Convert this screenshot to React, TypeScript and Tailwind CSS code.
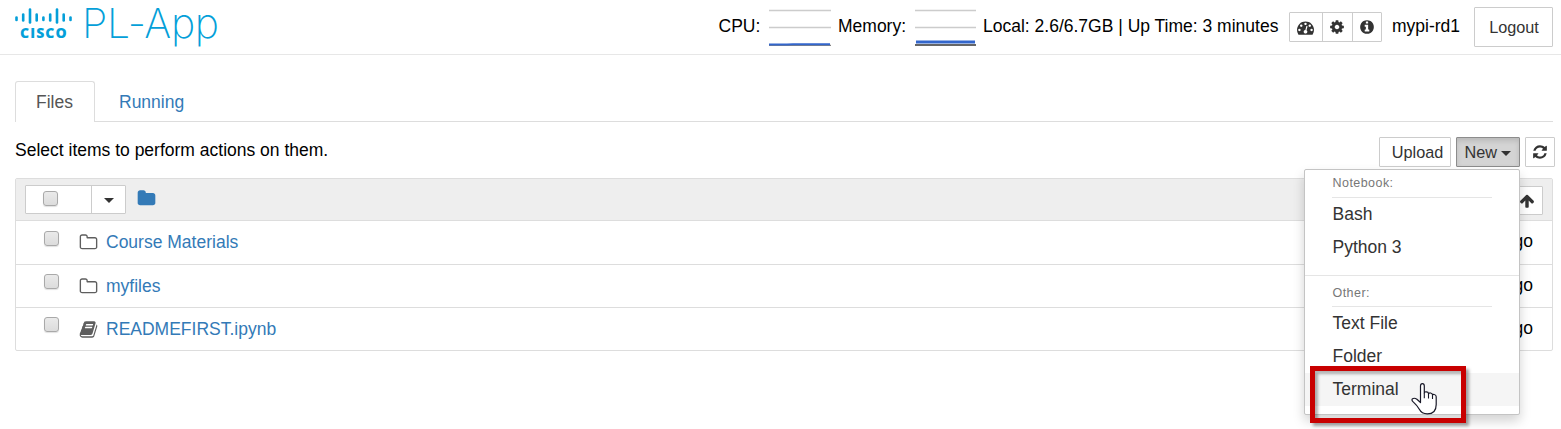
import type { ReactNode } from "react";

const ICONS = {
  dashboard:
    "M384 1152q0-53-37.5-90.5t-90.5-37.5-90.5 37.5-37.5 90.5 37.5 90.5 90.5 37.5 90.5-37.5 37.5-90.5zm192-448q0-53-37.5-90.5t-90.5-37.5-90.5 37.5-37.5 90.5 37.5 90.5 90.5 37.5 90.5-37.5 37.5-90.5zm428 481l101-382q6-26-7.5-48.5t-38.5-29.5-48 6.5-30 39.5l-101 382q-60 5-107 43.5t-63 98.5q-20 77 20 146t117 89 146-20 89-117q16-60-6-117t-72-91zm660-33q0-53-37.5-90.5t-90.5-37.5-90.5 37.5-37.5 90.5 37.5 90.5 90.5 37.5 90.5-37.5 37.5-90.5zm-640-640q0-53-37.5-90.5t-90.5-37.5-90.5 37.5-37.5 90.5 37.5 90.5 90.5 37.5 90.5-37.5 37.5-90.5zm448 192q0-53-37.5-90.5t-90.5-37.5-90.5 37.5-37.5 90.5 37.5 90.5 90.5 37.5 90.5-37.5 37.5-90.5zm320 448q0 261-141 483-19 29-54 29h-1402q-35 0-54-29-141-221-141-483 0-182 71-348t191-286 286-191 348-71 348 71 286 191 191 286 71 348z",
  cog: "M1152 896q0-106-75-181t-181-75-181 75-75 181 75 181 181 75 181-75 75-181zm512-109v222q0 12-8 23t-20 13l-185 28q-19 54-39 91 35 50 107 138 10 12 10 25t-9 23q-27 37-99 108t-94 71q-12 0-26-9l-138-108q-44 23-91 38-16 136-29 186-7 28-36 28h-222q-14 0-24.5-8.5t-11.5-21.5l-28-184q-49-16-90-37l-141 107q-10 9-25 9-14 0-25-11-126-114-165-168-7-10-7-23 0-12 8-23 15-21 51-66.5t54-70.5q-27-50-41-99l-183-27q-13-2-21-12.5t-8-23.5v-222q0-12 8-23t19-13l186-28q14-46 39-92-40-57-107-138-10-12-10-24 0-10 9-23 26-36 98.5-107.5t94.5-71.5q13 0 26 10l138 107q44-23 91-38 16-136 29-186 7-28 36-28h222q14 0 24.5 8.5t11.5 21.5l28 184q49 16 90 37l142-107q9-9 24-9 13 0 25 10 129 119 165 170 7 8 7 22 0 12-8 23-15 21-51 66.5t-54 70.5q26 50 41 98l183 28q13 2 21 12.5t8 23.5z",
  info: "M1152 1376v-160q0-14-9-23t-23-9h-96v-512q0-14-9-23t-23-9h-320q-14 0-23 9t-9 23v160q0 14 9 23t23 9h96v320h-96q-14 0-23 9t-9 23v160q0 14 9 23t23 9h448q14 0 23-9t9-23zm-128-896v-160q0-14-9-23t-23-9h-192q-14 0-23 9t-9 23v160q0 14 9 23t23 9h192q14 0 23-9t9-23zm640 416q0 209-103 385.5t-279.5 279.5-385.5 103-385.5-103-279.5-279.5-103-385.5 103-385.5 279.5-279.5 385.5-103 385.5 103 279.5 279.5 103 385.5z",
  folder:
    "M1728 608v704q0 92-66 158t-158 66h-1216q-92 0-158-66t-66-158v-960q0-92 66-158t158-66h320q92 0 158 66t66 158v32h672q92 0 158 66t66 158z",
  folderOutline:
    "M1600 1312v-704q0-40-28-68t-68-28h-704q-40 0-68-28t-28-68v-64q0-40-28-68t-68-28h-320q-40 0-68 28t-28 68v960q0 40 28 68t68 28h1216q40 0 68-28t28-68zm128-704v704q0 92-66 158t-158 66h-1216q-92 0-158-66t-66-158v-960q0-92 66-158t158-66h320q92 0 158 66t66 158v32h672q92 0 158 66t66 158z",
  book: "M1703 478q40 57 18 129l-275 906q-19 64-76.5 107.5t-122.5 43.5h-923q-77 0-148.5-53.5t-99.5-131.5q-24-67-2-127 0-4 3-27t4-37q1-8-3-21.5t-3-19.5q2-11 8-21t16.5-23.5 16.5-23.5q23-38 45-91.5t30-91.5q3-10 .5-30t-.5-28q3-11 17-28t17-23q21-36 42-92t25-90q1-9-2.5-32t.5-28q4-13 22-30.5t22-22.5q19-26 42.5-84.5t27.5-96.5q1-8-3-25.5t-2-26.5q2-8 9-18t18-23 17-21q8-12 16.5-30.5t15-35 16-36 19.5-32 26.5-23.5 36-11.5 47.5 5.5l-1 3q38-9 51-9h761q74 0 114 56t18 130l-274 906q-36 119-71.5 153.5t-128.5 34.5h-869q-27 0-38 15-11 16-1 43 24 70 144 70h923q29 0 56-15.5t35-41.5l300-987q7-22 5-57 38 15 59 43zm-1064 2q-4 13 2 22.5t20 9.5h608q13 0 25.5-9.5t16.5-22.5l21-64q4-13-2-22.5t-20-9.5h-608q-13 0-25.5 9.5t-16.5 22.5zm-83 256q-4 13 2 22.5t20 9.5h608q13 0 25.5-9.5t16.5-22.5l21-64q4-13-2-22.5t-20-9.5h-608q-13 0-25.5 9.5t-16.5 22.5z",
  refresh:
    "M1639 1056q0 5-1 7-64 268-268 434.5t-478 166.5q-146 0-282.5-55t-243.5-157l-129 129q-19 19-45 19t-45-19-19-45v-448q0-26 19-45t45-19h448q26 0 45 19t19 45-19 45l-137 137q71 66 161 102t187 36q134 0 250-65t186-179q11-17 53-117 8-23 30-23h192q13 0 22.5 9.5t9.5 22.5zm25-800v448q0 26-19 45t-45 19h-448q-26 0-45-19t-19-45 19-45l138-138q-148-137-349-137-134 0-250 65t-186 179q-11 17-53 117-8 23-30 23h-199q-13 0-22.5-9.5t-9.5-22.5v-7q65-268 270-434.5t480-166.5q146 0 284 55.5t245 156.5l130-129q19-19 45-19t45 19 19 45z",
  arrowUp:
    "M1675 971q0 51-37 90l-75 75q-38 38-91 38-54 0-90-38l-294-293v704q0 52-37.5 84.5t-90.5 32.5h-128q-53 0-90.5-32.5t-37.5-84.5v-704l-294 293q-36 38-90 38t-90-38l-75-75q-38-38-38-90 0-53 38-91l651-651q35-37 90-37 54 0 91 37l651 651q37 39 37 91z",
};

function Icon({ name, className }: { name: keyof typeof ICONS; className: string }) {
  return (
    <svg viewBox="0 0 1792 1792" fill="currentColor" className={`shrink-0 ${className}`} aria-hidden="true">
      <path d={ICONS[name]} />
    </svg>
  );
}

function Caret({ className = "" }: { className?: string }) {
  return (
    <svg viewBox="0 0 10 5" className={`h-[5px] w-[10px] shrink-0 ${className}`} fill="#333" aria-hidden="true">
      <path d="M0 0h10L5 5z" />
    </svg>
  );
}

function Checkbox({ className = "" }: { className?: string }) {
  return (
    <span
      role="checkbox"
      aria-checked="false"
      className={`block size-[15px] shrink-0 rounded-[3px] border border-[#a9a9a9] bg-linear-to-b from-[#eaeaea] to-[#dcdcdc] shadow-[0_1px_1px_rgba(0,0,0,0.12)] ${className}`}
    />
  );
}

function Logo() {
  const bars: [number, number, number][] = [
    [16.5, 17.5, 20], [23.2, 14.5, 20.5], [30, 9.5, 22.5], [36.7, 14.5, 20.5], [43.4, 17.5, 20],
    [50.2, 14.5, 20.5], [57, 9.5, 22.5], [63.7, 14.5, 20.5], [70.5, 17.5, 20],
  ];
  return (
    <div className="flex h-full w-[210px] shrink-0 text-[#049fd9]">
      <div className="flex w-[67px] flex-col">
        <svg viewBox="15 0 67 26" className="h-[26px] w-[67px] shrink-0" stroke="currentColor" strokeWidth="2.6" strokeLinecap="round" aria-hidden="true">
          {bars.map(([x, top, bottom]) => (
            <path key={x} d={`M${x} ${top}V${bottom}`} />
          ))}
        </svg>
        <span className="pl-[5px] font-['Open_Sans'] text-[14px] leading-[14px] font-extrabold tracking-[1.1px]">CISCO</span>
      </div>
      <span className="h-[54px] font-['Inter'] text-[41px] leading-[46px] font-extralight tracking-[-0.3px] whitespace-nowrap">PL-App</span>
    </div>
  );
}

function Gauge({ memory = false, className }: { memory?: boolean; className: string }) {
  return (
    <svg viewBox="0 0 62 38" preserveAspectRatio="none" className={`mt-1 h-[38px] shrink-0 ${className}`} aria-hidden="true">
      <path d="M0 1.5h62M0 18.5h62" stroke="#ccc" strokeWidth="1.3" />
      {memory ? (
        <>
          <path d="M0 36h62" stroke="#666" strokeWidth="2" />
          <path d="M1 33h60" stroke="#36c" strokeWidth="3" />
        </>
      ) : (
        <>
          <path d="M0 36.3h62" stroke="#666" strokeWidth="1" />
          <path d="M0 35.5h18l6-.3h37" stroke="#36c" strokeWidth="2" fill="none" />
        </>
      )}
    </svg>
  );
}

function Row({ icon, name, className }: { icon: "folderOutline" | "book"; name: string; className: string }) {
  return (
    <div className={`flex items-center border-[#ddd] pr-[19px] pl-7 ${className}`}>
      <Checkbox className="mb-[9px]" />
      <Icon name={icon} className="ml-5 size-[19px] text-[#5e5e5e]" />
      <a className="ml-2 text-[#337ab7]">{name}</a>
      <span className="mb-[2px] ml-auto">ago</span>
    </div>
  );
}

function MenuHeader({ children }: { children: ReactNode }) {
  return (
    <div className="mr-[27px] ml-[27px] border-b border-[#e5e5e5] pl-[0.5px] text-[12.5px] tracking-[0.45px] text-[#777]">
      {children}
    </div>
  );
}

function MenuItem({ children, active = false }: { children: ReactNode; active?: boolean }) {
  return <div className={`h-[33px] pl-[27.5px] leading-[33px] ${active ? "bg-[#f5f5f5]" : ""}`}>{children}</div>;
}

function HandPointer() {
  return (
    <svg viewBox="0 0 26 33" className="absolute top-[382px] left-[1411px] h-[33px] w-[26px]" aria-hidden="true">
      <path
        d="M9.5 20.5V4Q9.5 1.6 11.4 1.6T13.3 4v7.2q0-1.5 2-1.4t2.2 1.6v.7q.1-1.3 2-1.1t2 1.8v.5q.1-1 1.7-.8 2 .3 2 2.2V22.5q0 9.4-8.9 9.4-5.6 0-8-4.6-1.9-3.6-6.1-7.4-2.1-2.1-.6-3.2 1.8-1.1 4.3.6z"
        fill="#fff"
        stroke="#181827"
        strokeWidth="1.2"
        strokeLinejoin="round"
      />
      <path d="M13.3 11.2v5M17.5 12v4.5M21.5 13.2v3.8" stroke="#181827" strokeWidth="1.1" />
    </svg>
  );
}

export default function App() {
  return (
    <div className="relative h-[429px] w-[1561px] overflow-hidden bg-white font-['Liberation_Sans',Arial,sans-serif] text-[17.5px] leading-[25px] whitespace-nowrap text-black">
      <header className="flex h-[55px] border-b border-[#e7e7e7] pr-2 pl-[15px]">
        <Logo />
        <div className="ml-auto flex h-[52px] items-center">
          <span className="w-[50.5px]">CPU:</span>
          <Gauge className="w-[62px]" />
          <span className="ml-[7px] w-[77px]">Memory:</span>
          <Gauge memory className="w-[61px]" />
          <span className="ml-[7px] w-[306px]">Local: 2.6/6.7GB | Up Time: 3 minutes</span>
          <div className="mt-[2px] flex h-[30px] w-[93px] rounded-[1px] border border-[#ccc] text-[#333]">
            <button className="flex w-[33px] items-center justify-center border-r border-[#ccc] pr-[1px]"><Icon name="dashboard" className="size-[17px]" /></button>
            <button className="flex w-[30px] items-center justify-center border-r border-[#ccc] pr-[2px]"><Icon name="cog" className="size-4" /></button>
            <button className="flex w-[28px] items-center justify-center"><Icon name="info" className="size-4" /></button>
          </div>
          <span className="ml-[10px] w-[82px]">mypi-rd1</span>
          <button className="mt-[2px] h-10 w-[79px] rounded-[1px] border border-[#ccc] pl-[1px] text-[16.25px] text-[#333]">Logout</button>
        </div>
      </header>

      <main className="pr-2 pl-[15px] pt-[26px]">
        <nav className="flex h-[41px]">
          <a className="w-20 rounded-t-[3px] border border-b-0 border-[#ddd] pr-[1px] text-center leading-10 text-[#555]">Files</a>
          <a className="grow border-b border-[#ddd] pl-6 leading-[42px] text-[#337ab7]">Running</a>
        </nav>

        <div className="-mr-[2px] flex h-[56px] items-start pt-[15px] text-[16.25px] text-[#333]">
          <p className="mt-[1px] mr-auto text-[17.5px] text-black">Select items to perform actions on them.</p>
          <button className="h-[30px] w-[72px] rounded-[1px] border border-[#ccc] pl-[5px]">Upload</button>
          <button className="ml-[5px] flex h-[30px] w-16 items-center rounded-[1px] border border-[#8c8c8c] bg-[#d4d4d4] pl-[7.5px] shadow-[inset_0_3px_5px_rgba(0,0,0,0.125)]">
            New
            <Caret className="mt-[2px] ml-1" />
          </button>
          <button className="ml-[5px] flex size-[30px] items-center justify-center rounded-[1px] border border-[#ccc]">
            <Icon name="refresh" className="size-4" />
          </button>
        </div>

        <section className="h-[173px] rounded-[2px] border border-[#ddd]">
          <div className="flex h-[42px] items-center border-b border-[#ddd] bg-[#eee] pr-[9px] pl-[9px]">
            <div className="flex h-[29px] w-[101px] rounded-[1px] border border-[#ccc] bg-white">
              <div className="flex w-[66px] items-center border-r border-[#ccc] pl-[17px]"><Checkbox className="mb-[2px]" /></div>
              <div className="flex grow items-center justify-center"><Caret className="mt-[2px]" /></div>
            </div>
            <Icon name="folder" className="mb-[2px] ml-[11px] size-[19px] text-[#337ab7]" />
            <button className="mt-[2px] ml-auto flex h-[29px] w-8 items-center justify-center rounded-[1px] border border-[#ccc] bg-white text-[#333]">
              <Icon name="arrowUp" className="size-4" />
            </button>
          </div>
          <Row icon="folderOutline" name="Course Materials" className="h-11 border-b" />
          <Row icon="folderOutline" name="myfiles" className="h-[43px] border-b" />
          <Row icon="book" name="READMEFIRST.ipynb" className="h-[42px]" />
        </section>
      </main>

      <div className="absolute top-[169px] left-[1304px] h-[246px] w-[216px] rounded-[2px] border border-[#c4c4c4] bg-white text-[#333] shadow-[0_6px_12px_rgba(0,0,0,0.176)]">
        <div className="h-[28px] leading-[27px]"><MenuHeader>Notebook:</MenuHeader></div>
        <MenuItem>Bash</MenuItem>
        <MenuItem>Python 3</MenuItem>
        <div className="mt-[11px] h-px bg-[#e5e5e5]" />
        <div className="mb-[1px] h-[30px] pt-[4px] leading-[26px]"><MenuHeader>Other:</MenuHeader></div>
        <MenuItem>Text File</MenuItem>
        <MenuItem>Folder</MenuItem>
        <MenuItem active>Terminal</MenuItem>
      </div>

      <div className="absolute top-[366px] left-[1310px] h-[57px] w-[156px] border-5 border-[#c80000] shadow-[3px_3px_3px_rgba(0,0,0,0.35),inset_3px_3px_3px_rgba(0,0,0,0.3)]" />
      <HandPointer />
    </div>
  );
}
